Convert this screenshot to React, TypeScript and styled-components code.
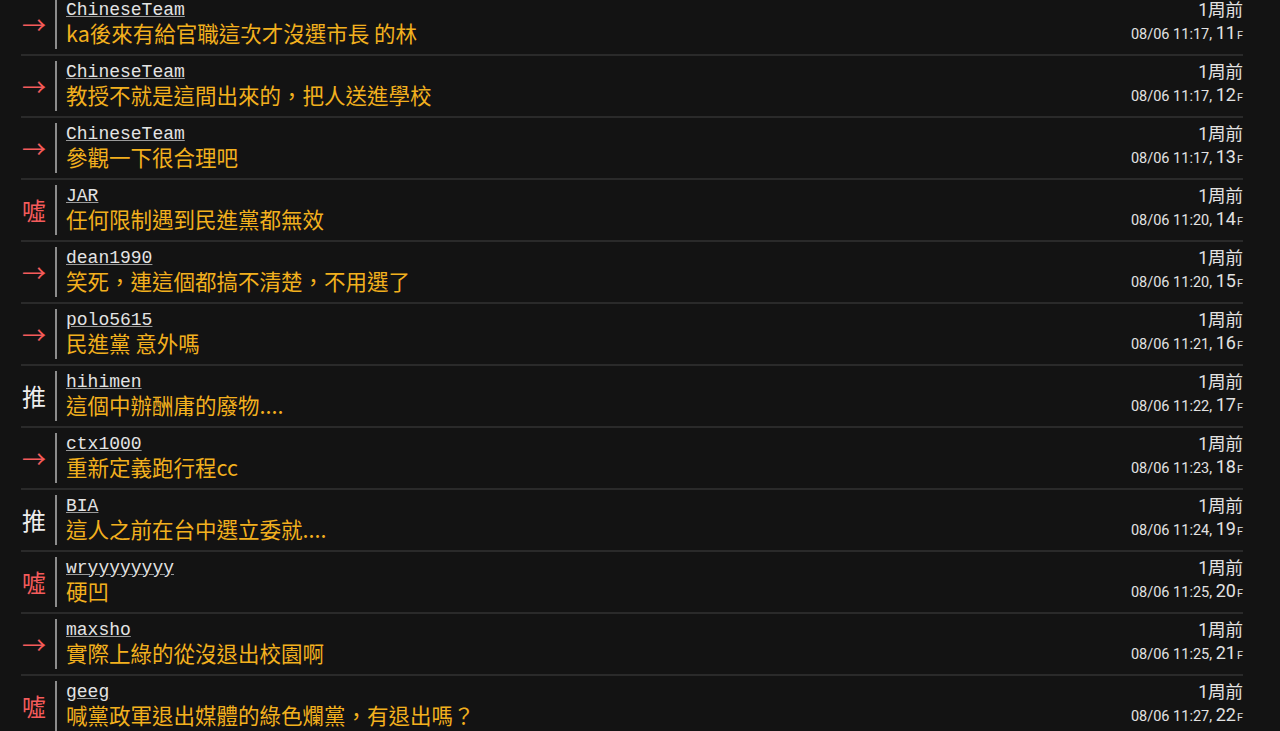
import React from "react";
import styled, { createGlobalStyle } from "styled-components";

const Global = createGlobalStyle`
  html, body { margin: 0; padding: 0; background: #131313; overflow: hidden; }
  body { font-family: Roboto, "Noto Sans CJK TC", sans-serif; }
`;

const List = styled.div`
  margin-top: -6px;
  padding: 0 37px 0 21px;
`;

const Row = styled.div`
  display: flex;
  align-items: stretch;
  height: 62px;
  box-sizing: border-box;
  padding: 5px 0 5px;
  border-bottom: 2px solid #2a2a2a;
`;

const Tag = styled.div<{ $kind: string }>`
  width: 34px;
  flex: none;
  display: flex;
  align-items: center;
  font-family: "Noto Sans CJK TC", sans-serif;
  font-size: 24px;
  padding-left: 1px;
  padding-bottom: 2px;
  box-sizing: border-box;
  color: ${(p) => (p.$kind === "推" ? "#eeeeee" : "#f45b5b")};
`;

const Body = styled.div`
  flex: 1;
  border-left: 2px solid #8c8c8c;
  padding-left: 9px;
  display: flex;
  flex-direction: column;
  justify-content: center;
  min-width: 0;
`;

const User = styled.span`
  font-family: "Liberation Mono", monospace;
  font-size: 18px;
  line-height: 20px;
  color: #e4e4e4;
  text-decoration: underline;
  text-decoration-color: #9a9a9a;
  text-underline-offset: 1px;
  align-self: flex-start;
`;

const Text = styled.div`
  font-family: "Noto Sans CJK TC", sans-serif;
  font-size: 21.5px;
  line-height: 26px;
  margin-bottom: 3px;
  color: #f2b01e;
  white-space: pre;
`;

const Meta = styled.div`
  display: flex;
  flex-direction: column;
  align-items: flex-end;
  justify-content: center;
  padding-bottom: 3px;
  color: #e2e2e2;
`;

const Ago = styled.div`
  font-family: Roboto, "Noto Sans CJK TC", sans-serif;
  font-size: 17.5px;
  line-height: 24px;
`;

const Stamp = styled.div`
  font-family: Roboto, sans-serif;
  font-size: 14.5px;
  line-height: 22px;
`;

const Floor = styled.span`
  font-size: 18px;
`;

const F = styled.span`
  font-size: 11px;
  margin-left: 1px;
`;

const data: [string, string, string, string, number][] = [
  ["→", "ChineseTeam", "ka後來有給官職這次才沒選市長 的林", "11:17", 11],
  ["→", "ChineseTeam", "教授不就是這間出來的，把人送進學校", "11:17", 12],
  ["→", "ChineseTeam", "參觀一下很合理吧", "11:17", 13],
  ["噓", "JAR", "任何限制遇到民進黨都無效", "11:20", 14],
  ["→", "dean1990", "笑死，連這個都搞不清楚，不用選了", "11:20", 15],
  ["→", "polo5615", "民進黨 意外嗎", "11:21", 16],
  ["推", "hihimen", "這個中辦酬庸的廢物....", "11:22", 17],
  ["→", "ctx1000", "重新定義跑行程cc", "11:23", 18],
  ["推", "BIA", "這人之前在台中選立委就....", "11:24", 19],
  ["噓", "wryyyyyyyy", "硬凹", "11:25", 20],
  ["→", "maxsho", "實際上綠的從沒退出校園啊", "11:25", 21],
  ["噓", "geeg", "喊黨政軍退出媒體的綠色爛黨，有退出嗎？", "11:27", 22],
];

export default function App() {
  return (
    <>
      <Global />
      <List>
        {data.map(([tag, user, text, time, floor]) => (
          <Row key={floor}>
            <Tag $kind={tag}>{tag}</Tag>
            <Body>
              <User>{user}</User>
              <Text>{text}</Text>
            </Body>
            <Meta>
              <Ago>1周前</Ago>
              <Stamp>
                08/06 {time}, <Floor>{floor}</Floor>
                <F>F</F>
              </Stamp>
            </Meta>
          </Row>
        ))}
      </List>
    </>
  );
}
